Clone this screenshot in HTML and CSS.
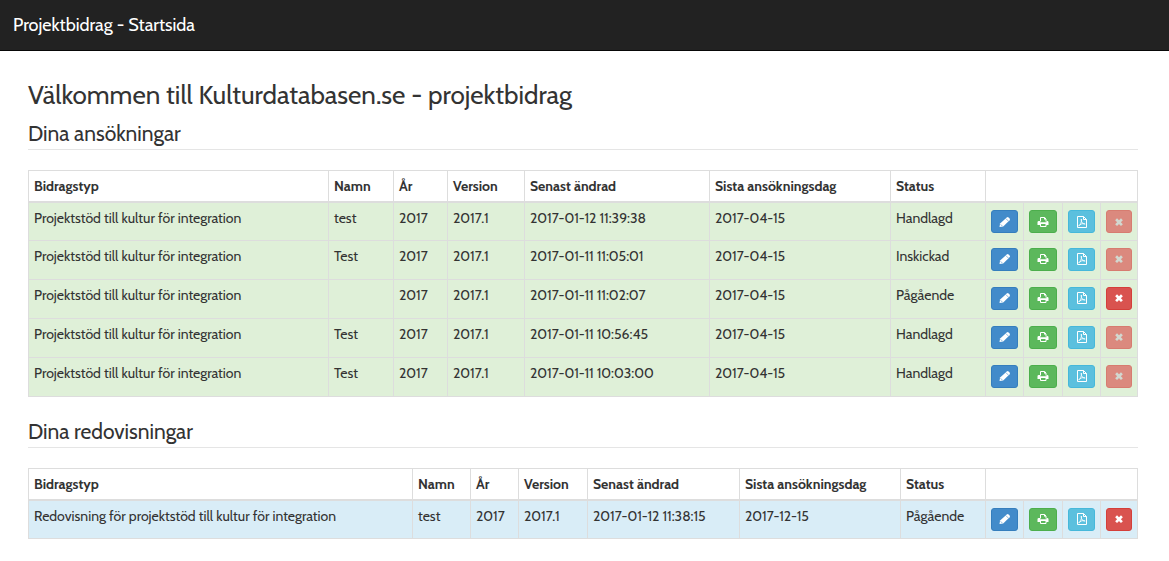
FILE: index.html
```html
<!DOCTYPE html>
<html lang="sv">
<head>
<meta charset="utf-8">
<meta name="viewport" content="width=device-width, initial-scale=1">
<title>Projektbidrag - Startsida</title>
<link rel="stylesheet" href="styles.css">
</head>
<body>
<svg class="sprite" aria-hidden="true">
  <symbol id="pencil" viewBox="0 0 12 12"><path fill="currentColor" d="M.5 11l.6-3.400L7.800 1.400q.9-.7 1.700 0l1.100 1.100q.8.900 0 1.700L4.200 10.400z"/><path fill="none" stroke="#428bca" stroke-width=".6" d="M7 2.700l2.300 2.300M1.600 8.300l1.800 1.800"/></symbol>
  <symbol id="print" viewBox="0 0 12 12"><path fill="none" stroke="currentColor" d="M3.500 5.500v-4h4l1.500 1.500v2.500M3.500 8v2.500h5.500V8"/><path fill="currentColor" d="M7 1.500h1l1 1v1H7zM1.800 5H3v1.200h6.500V5h.7Q11.500 5 11.500 6.300V9H9V8H3.500v1H.500V6.300Q.5 5 1.800 5z"/></symbol>
  <symbol id="pdf" viewBox="0 0 12 12"><path fill="none" stroke="currentColor" d="M1.500.5h6l3 3v8h-9zM7.500.5v3h3"/><path fill="none" stroke="currentColor" stroke-width=".8" d="M5.300 3q-.4 2.500 1.200 4.200 1.300 1.200 2.700.8-.8-.9-3.300-.2-2.500.6-3.200 2 1 .2 2-2.200Q6 5 5.300 3z"/></symbol>
  <symbol id="cross" viewBox="0 0 12 12"><path fill="none" stroke="currentColor" stroke-width="3.200" d="M2.500 2.700l7 7M9.500 2.700l-7 7"/></symbol>
</svg>
<header class="navbar"><a class="brand" href="#">Projektbidrag - Startsida</a></header>
<main class="content">
  <h1 class="title">Välkommen till Kulturdatabasen.se - projektbidrag</h1>

  <section class="section">
    <h2 class="subtitle">Dina ansökningar</h2>
    <table class="grid">
      <colgroup><col><col class="w65"><col class="w54"><col class="w77"><col class="w185"><col class="w181"><col class="w95"><col class="w38"><col class="w39"><col class="w38"><col class="w37"></colgroup>
      <thead><tr><th>Bidragstyp</th><th>Namn</th><th>År</th><th>Version</th><th>Senast ändrad</th><th>Sista ansökningsdag</th><th>Status</th><th colspan="4"></th></tr></thead>
      <tbody class="success">
        <tr><td>Projektstöd till kultur för integration</td><td>test</td><td>2017</td><td>2017.1</td><td>2017-01-12 11:39:38</td><td>2017-04-15</td><td>Handlagd</td>
          <td><button class="btn edit" aria-label="Redigera"><svg class="icon"><use href="#pencil"/></svg></button></td><td><button class="btn printer" aria-label="Skriv ut"><svg class="icon"><use href="#print"/></svg></button></td><td><button class="btn pdf" aria-label="PDF"><svg class="icon"><use href="#pdf"/></svg></button></td><td><button class="btn remove" aria-label="Ta bort" disabled><svg class="icon small"><use href="#cross"/></svg></button></td></tr>
        <tr><td>Projektstöd till kultur för integration</td><td>Test</td><td>2017</td><td>2017.1</td><td>2017-01-11 11:05:01</td><td>2017-04-15</td><td>Inskickad</td>
          <td><button class="btn edit" aria-label="Redigera"><svg class="icon"><use href="#pencil"/></svg></button></td><td><button class="btn printer" aria-label="Skriv ut"><svg class="icon"><use href="#print"/></svg></button></td><td><button class="btn pdf" aria-label="PDF"><svg class="icon"><use href="#pdf"/></svg></button></td><td><button class="btn remove" aria-label="Ta bort" disabled><svg class="icon small"><use href="#cross"/></svg></button></td></tr>
        <tr><td>Projektstöd till kultur för integration</td><td></td><td>2017</td><td>2017.1</td><td>2017-01-11 11:02:07</td><td>2017-04-15</td><td>Pågående</td>
          <td><button class="btn edit" aria-label="Redigera"><svg class="icon"><use href="#pencil"/></svg></button></td><td><button class="btn printer" aria-label="Skriv ut"><svg class="icon"><use href="#print"/></svg></button></td><td><button class="btn pdf" aria-label="PDF"><svg class="icon"><use href="#pdf"/></svg></button></td><td><button class="btn remove" aria-label="Ta bort"><svg class="icon small"><use href="#cross"/></svg></button></td></tr>
        <tr><td>Projektstöd till kultur för integration</td><td>Test</td><td>2017</td><td>2017.1</td><td>2017-01-11 10:56:45</td><td>2017-04-15</td><td>Handlagd</td>
          <td><button class="btn edit" aria-label="Redigera"><svg class="icon"><use href="#pencil"/></svg></button></td><td><button class="btn printer" aria-label="Skriv ut"><svg class="icon"><use href="#print"/></svg></button></td><td><button class="btn pdf" aria-label="PDF"><svg class="icon"><use href="#pdf"/></svg></button></td><td><button class="btn remove" aria-label="Ta bort" disabled><svg class="icon small"><use href="#cross"/></svg></button></td></tr>
        <tr><td>Projektstöd till kultur för integration</td><td>Test</td><td>2017</td><td>2017.1</td><td>2017-01-11 10:03:00</td><td>2017-04-15</td><td>Handlagd</td>
          <td><button class="btn edit" aria-label="Redigera"><svg class="icon"><use href="#pencil"/></svg></button></td><td><button class="btn printer" aria-label="Skriv ut"><svg class="icon"><use href="#print"/></svg></button></td><td><button class="btn pdf" aria-label="PDF"><svg class="icon"><use href="#pdf"/></svg></button></td><td><button class="btn remove" aria-label="Ta bort" disabled><svg class="icon small"><use href="#cross"/></svg></button></td></tr>
      </tbody>
    </table>
  </section>

  <section class="section">
    <h2 class="subtitle">Dina redovisningar</h2>
    <table class="grid">
      <colgroup><col><col class="w58"><col class="w48"><col class="w69"><col class="w152"><col class="w161"><col class="w85"><col class="w38"><col class="w39"><col class="w38"><col class="w37"></colgroup>
      <thead><tr><th>Bidragstyp</th><th>Namn</th><th>År</th><th>Version</th><th>Senast ändrad</th><th>Sista ansökningsdag</th><th>Status</th><th colspan="4"></th></tr></thead>
      <tbody class="info">
        <tr><td>Redovisning för projektstöd till kultur för integration</td><td>test</td><td>2017</td><td>2017.1</td><td>2017-01-12 11:38:15</td><td>2017-12-15</td><td>Pågående</td>
          <td><button class="btn edit" aria-label="Redigera"><svg class="icon"><use href="#pencil"/></svg></button></td><td><button class="btn printer" aria-label="Skriv ut"><svg class="icon"><use href="#print"/></svg></button></td><td><button class="btn pdf" aria-label="PDF"><svg class="icon"><use href="#pdf"/></svg></button></td><td><button class="btn remove" aria-label="Ta bort"><svg class="icon small"><use href="#cross"/></svg></button></td></tr>
      </tbody>
    </table>
  </section>
</main>
</body>
</html>
```
FILE: styles.css
```css
* { box-sizing: border-box; }
body { margin: 0; background: #fff; color: #333; font: 14px/20px Cabin, Lato, sans-serif; }
.sprite { display: none; }
.navbar { display: flex; align-items: center; height: 51px; padding: 0 13px; background: #222; border-bottom: 1px solid #080808; }
.brand { color: #fff; font-size: 18px; text-decoration: none; }
.content { padding: 29px 31px 0 28px; }
.title { margin: 0; font-size: 26px; line-height: 30px; font-weight: 400; }
.section { margin-bottom: 11px; }
.subtitle { margin: 0 0 20px; padding: 10px 0 1px; border-bottom: 1px solid #e5e5e5; font-size: 21px; line-height: 28px; font-weight: 400; }
.grid { width: 100%; table-layout: fixed; border-collapse: collapse; }
.grid th, .grid td { border: 1px solid #ddd; padding: 5px; text-align: left; vertical-align: top; white-space: nowrap; }
.grid th { border-bottom-width: 2px; font-weight: 700; }
.grid td { height: 39px; }
.success tr:first-child td { height: 38px; }
.success { background: #dff0d8; }
.info { background: #d9edf7; }
.w37 { width: 37px; }
.w38 { width: 38px; }
.w39 { width: 39px; }
.w48 { width: 48px; }
.w54 { width: 54px; }
.w58 { width: 58px; }
.w65 { width: 65px; }
.w69 { width: 69px; }
.w77 { width: 77px; }
.w85 { width: 85px; }
.w95 { width: 95px; }
.w152 { width: 152px; }
.w161 { width: 161px; }
.w181 { width: 181px; }
.w185 { width: 185px; }
.btn { display: flex; align-items: center; justify-content: center; width: 27px; height: 23px; margin: 2px 0 0; padding: 0; border: 1px solid; border-radius: 3px; color: #fff; cursor: pointer; }
.edit { background: #428bca; border-color: #357ebd; }
.printer { width: 28px; background: #5cb85c; border-color: #4cae4c; }
.pdf { background: #5bc0de; border-color: #46b8da; }
.remove { width: 26px; background: #d9534f; border-color: #d43f3a; }
.remove:disabled { opacity: .65; color: #ccc; cursor: not-allowed; }
.icon { width: 12px; height: 12px; }
.small { width: 10px; height: 10px; }
```
